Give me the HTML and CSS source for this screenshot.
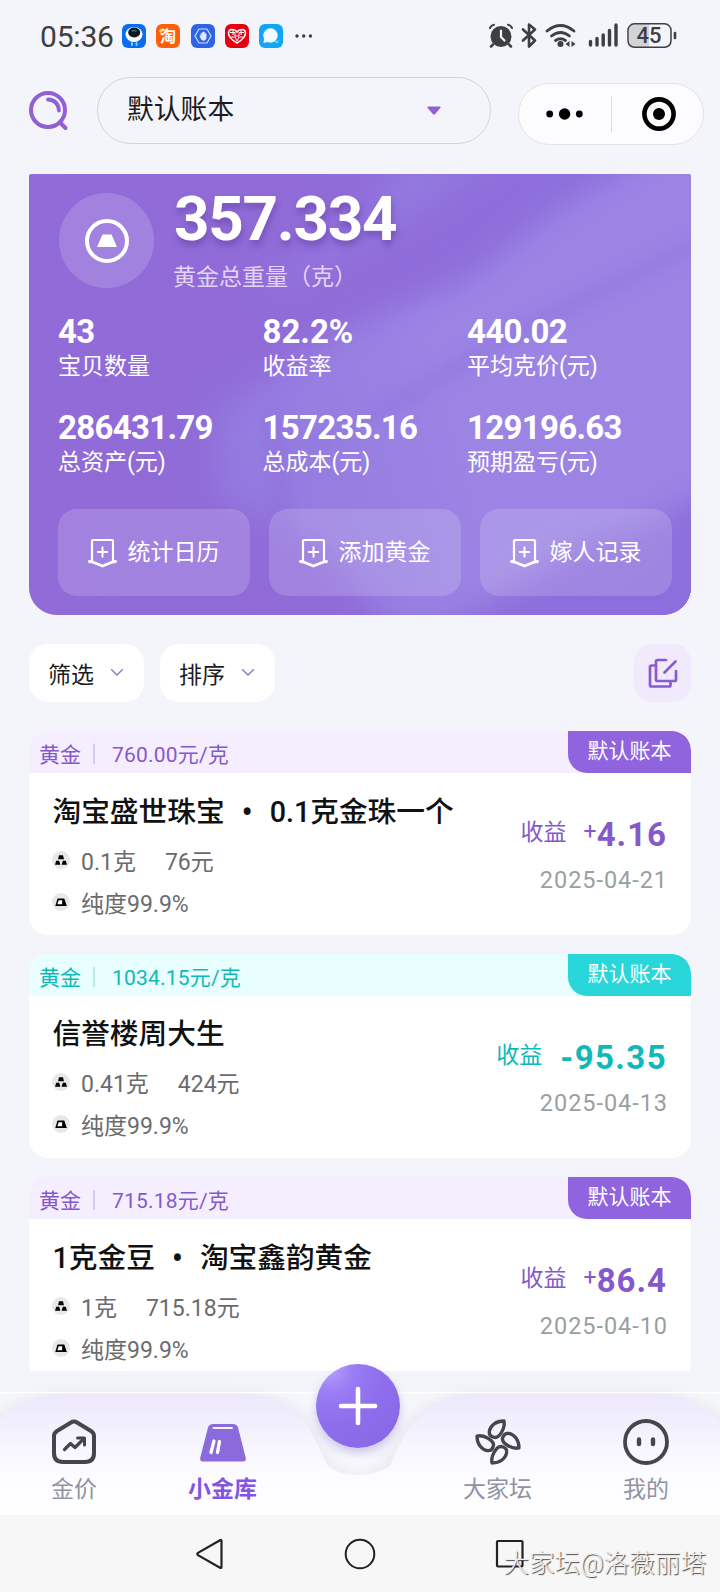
FILE: index.html
```html
<!DOCTYPE html>
<html lang="zh-CN">
<head>
<meta charset="utf-8">
<title>小金库</title>
<link rel="stylesheet" href="styles.css">
</head>
<body>
<svg class="defs" aria-hidden="true">
  <symbol id="i-badge" viewBox="0 0 30 30">
    <path d="M5 23V3.200q0-1.200 1.200-1.200h18.600q1.200 0 1.200 1.200V23" fill="none" stroke="#fff" stroke-width="2.200"/>
    <path d="M2.500 23.500l3 .5 10 4 10-4 3-.5" fill="none" stroke="#fff" stroke-width="2.800" stroke-linecap="round" stroke-linejoin="round"/>
    <path d="M15.500 8.500v11M10 14h11" stroke="#fff" stroke-width="1.900"/>
  </symbol>
  <symbol id="i-weight" viewBox="0 0 18 18">
    <circle cx="9" cy="9" r="9" fill="#e8e8e8"/>
    <path d="M7 4.300h4l1 4H6zM4.200 9.700h3l1.200 4.100H3zM10.800 9.700h3l1.200 4.100H9.600z"/>
  </symbol>
  <symbol id="i-purity" viewBox="0 0 18 18">
    <circle cx="9" cy="9" r="9" fill="#e8e8e8"/>
    <path d="M5.500 5.500h6.800l2.500 7.500H3.300z"/>
    <path d="M6.800 7.200h3.300v4H5.300z" fill="#fff"/>
  </symbol>
</svg>

<div class="status">
  <span class="time">05:36</span>
  <div class="apps">
    <svg width="24" height="24" viewBox="0 0 24 24"><rect width="24" height="24" rx="6" fill="#0a6cf0"/><ellipse cx="12" cy="10.500" rx="8.500" ry="7.500" fill="#fff"/><ellipse cx="12.200" cy="8.500" rx="6" ry="5" fill="#0b1a22"/><path d="M10 7.500q2-2 4.500 0" stroke="#2a7b86" stroke-width="1.500" fill="none"/><path d="M10 19v2M14.500 19v2" stroke="#6fe3f5" stroke-width="1.800" stroke-linecap="round"/></svg>
    <svg width="24" height="24" viewBox="0 0 24 24"><rect width="24" height="24" rx="6" fill="#ff5e0b"/><text x="12" y="18" text-anchor="middle" class="tao">淘</text><circle cx="4.800" cy="7" r="1.800" fill="#ffe23a"/></svg>
    <svg width="24" height="24" viewBox="0 0 24 24"><rect width="24" height="24" rx="6" fill="#2f63e6"/><path d="M8 5h8l4 7-4 7H8l-4-7z" fill="none" stroke="#cfdcfb" stroke-width="1.200"/><path d="M8.500 11.500l1 .2V9.500h1.200V8.300H12V7.800h1.300v.7h1.200v1.200h1v4.500q-1 2.500-3.300 2.500-2.200 0-3.700-5.200z" fill="#dfe8fc"/></svg>
    <svg width="24" height="24" viewBox="0 0 24 24"><rect width="24" height="24" rx="6" fill="#e60012"/><path d="M12 19Q3.500 14 3.500 9q0-3.500 4-3.500 3 0 4.500 2.500 1.500-2.500 4.500-2.500 4 0 4 3.500 0 5-8.500 10z" fill="none" stroke="#fff" stroke-width="1.500"/><path d="M5 8.500h5v3.500h4V8.500h5M6 13h4l2 4 2-4h4M8 6v5M16 6v5" fill="none" stroke="#fff"/></svg>
    <svg width="24" height="24" viewBox="0 0 24 24"><rect width="24" height="24" rx="6" fill="#12a4f5"/><path d="M14 17.500q6 0 6-3l-1 5-3-1z" fill="#53d6f8"/><circle cx="11.500" cy="11.500" r="7.200" fill="#f2fbff"/><path d="M5 14l-.5 5 4.500-1z" fill="#f2fbff"/></svg>
  </div>
  <svg class="more" width="18" height="6" viewBox="0 0 18 6"><g fill="#3a3b3d"><circle cx="2" cy="3" r="1.700"/><circle cx="8.700" cy="3" r="1.700"/><circle cx="15.400" cy="3" r="1.700"/></g></svg>
  <svg class="signals" width="190" height="28" viewBox="0 0 190 28">
    <g fill="none" stroke="#3e3f42" stroke-linecap="round">
      <circle cx="13" cy="14.500" r="10.500" fill="#3e3f42" stroke="none"/>
      <path d="M2 6Q3.500 3 6 2.700M20 2.700q2.500.3 4 3.300" stroke-width="2"/>
      <path d="M5 22.500l-2 2M21 22.500l2 2" stroke-width="2.500"/>
      <path d="M13 8.500v6.500l3.500 3.500" stroke="#f4f5f9" stroke-width="2.200"/>
      <path d="M35 7.500l12 11-6 6V2.500l6 5-12 11" stroke-width="2.600" stroke-linejoin="round"/>
      <path d="M59 9q13.500-11 27 0M63.500 14q9-7 18 0M67.500 18.500q5-3.500 10 0" stroke-width="2.800"/>
      <circle cx="72.500" cy="22" r="3" fill="#3e3f42" stroke="none"/>
      <path d="M81.500 19v6l-4-3zM83.500 19v6l4-3z" fill="#3e3f42" stroke="none"/>
      <path d="M102.500 19.500v3.500M109 16.500v6.500M115.200 13v10M121.500 8.500v14.500M128 3v20" stroke-width="3.400"/>
    </g>
    <path d="M147 2h14v23h-14q-6-1-6-6V8q0-6 6-6z" fill="#d2d3d7"/>
    <rect x="140" y="1.800" width="43" height="23.500" rx="6.500" fill="none" stroke="#3e3f42" stroke-width="1.500"/>
    <path d="M187 11v5" stroke="#3e3f42" stroke-width="2.600" stroke-linecap="round"/>
    <text x="161" y="21" text-anchor="middle" class="batt">45</text>
  </svg>
</div>

<div class="header">
  <svg width="42" height="42" viewBox="0 0 42 42" fill="none" stroke="#9060d4" stroke-linecap="round"><circle cx="20" cy="21" r="17" stroke-width="4"/><path d="M20 10.500q10 .5 11 11" stroke-width="3.800"/><path d="M32.500 34l5 5" stroke-width="4"/></svg>
  <div class="book"><span>默认账本</span><svg width="14" height="9" viewBox="0 0 14 9"><path d="M1 .5h12q1 .3.500 1.200L8 8.200q-1 .8-2 0L.5 1.700Q0 .8 1 .5z" fill="#9060d4"/></svg></div>
  <div class="capsule">
    <svg width="38" height="14" viewBox="0 0 38 14"><circle cx="3.700" cy="7" r="3.400"/><circle cx="18.600" cy="7" r="5.700"/><circle cx="33.300" cy="7" r="3.400"/></svg>
    <i></i>
    <svg width="34" height="34" viewBox="0 0 34 34"><circle cx="17" cy="17" r="14.600" fill="none" stroke="#000" stroke-width="4.600"/><circle cx="17" cy="17" r="6"/></svg>
  </div>
</div>

<main class="view">
  <section class="summary">
    <svg class="silk" width="662" height="442" viewBox="0 0 662 442" aria-hidden="true">
      <defs>
        <filter id="soft" x="-30%" y="-30%" width="160%" height="160%"><feGaussianBlur stdDeviation="15"/></filter>
        <filter id="fine" x="-20%" y="-20%" width="140%" height="140%"><feGaussianBlur stdDeviation="7"/></filter>
        <linearGradient id="base"><stop offset="0" stop-color="#916bd8"/><stop offset=".5" stop-color="#906cd9"/><stop offset="1" stop-color="#8c70dd"/></linearGradient>
        <linearGradient id="sheen" gradientUnits="userSpaceOnUse" x1="200" y1="280" x2="420" y2="220"><stop offset="0" stop-color="#937adf"/><stop offset="1" stop-color="#9b84e4"/></linearGradient>
      </defs>
      <rect width="662" height="442" fill="url(#base)"/>
      <g filter="url(#soft)">
        <path d="M230 110L330 55 370-20H480L380 45 260 115z" fill="#9580e2" opacity=".6"/>
        <path d="M185 240L310 160 440 105 530 35 640-30 720-40V320L560 370 440 440 370 460 290 370 190 320z" fill="url(#sheen)"/>
        <path d="M410 470L520 410 720 290V480z" fill="#8c6edc"/>
      </g>
      <path d="M260 275L370 218 466 160 670 62V76L480 172 380 232 280 282z" fill="#8f74dd" opacity=".5" filter="url(#fine)"/>
      <path d="M235 240l18-8 12 130-20 60z" fill="#8e6edb" opacity=".45" filter="url(#fine)"/>
    </svg>
    <div class="total">
      <div class="coin"><svg width="46" height="46" viewBox="0 0 46 46"><circle cx="23" cy="23" r="20" fill="none" stroke="#fff" stroke-width="4"/><path d="M18.500 16.500h9l5.500 12.500h-20z" fill="#fff"/></svg></div>
      <div><div class="grams">357.334</div><div class="grams-label">黄金总重量（克）</div></div>
    </div>
    <div class="stats">
      <div><b>43</b><span>宝贝数量</span></div>
      <div><b class="pct">82.2%</b><span>收益率</span></div>
      <div><b>440.02</b><span>平均克价(元)</span></div>
      <div><b>286431.79</b><span>总资产(元)</span></div>
      <div><b>157235.16</b><span>总成本(元)</span></div>
      <div><b>129196.63</b><span>预期盈亏(元)</span></div>
    </div>
    <div class="actions">
      <div><svg width="30" height="30"><use href="#i-badge"/></svg>统计日历</div>
      <div><svg width="30" height="30"><use href="#i-badge"/></svg>添加黄金</div>
      <div><svg width="30" height="30"><use href="#i-badge"/></svg>嫁人记录</div>
    </div>
  </section>

  <div class="filters">
    <div class="chip">筛选<svg width="14" height="9" viewBox="0 0 14 9"><path d="M1.200 1.200L7 7l5.800-5.800" fill="none" stroke="#8f74b8" stroke-width="1.300"/></svg></div>
    <div class="chip">排序<svg width="14" height="9" viewBox="0 0 14 9"><path d="M1.200 1.200L7 7l5.800-5.800" fill="none" stroke="#8f74b8" stroke-width="1.300"/></svg></div>
    <div class="edit"><svg width="30" height="30" viewBox="0 0 30 30" fill="none" stroke="#8a5bd0" stroke-width="2.700" stroke-linecap="round" stroke-linejoin="round"><path d="M18 2H9.500Q8 2 8 3.500v18Q8 23 9.500 23h17q1.500 0 1.500-1.500V13"/><path d="M7 7.500H3.500Q2 7.500 2 9v18q0 1.500 1.500 1.500h17.500q1.500 0 1.500-1.500v-3"/><path d="M16.500 14.500L27.500 3.500"/></svg></div>
  </div>

  <article class="item">
    <div class="head"><span>黄金</span><i></i><span class="price">760.00元/克</span><span class="tag">默认账本</span></div>
    <div class="body">
      <div class="info"><h2>淘宝盛世珠宝<em>•</em>0.1克金珠一个</h2>
        <p><svg width="18" height="18"><use href="#i-weight"/></svg>0.1克<span class="cost">76元</span></p>
        <p><svg width="18" height="18"><use href="#i-purity"/></svg>纯度99.9%</p></div>
      <div class="gain"><div class="profit">收益<sup>+</sup><b>4.16</b></div><time>2025-04-21</time></div>
    </div>
  </article>
  <article class="item teal">
    <div class="head"><span>黄金</span><i></i><span class="price">1034.15元/克</span><span class="tag">默认账本</span></div>
    <div class="body">
      <div class="info"><h2>信誉楼周大生</h2>
        <p><svg width="18" height="18"><use href="#i-weight"/></svg>0.41克<span class="cost">424元</span></p>
        <p><svg width="18" height="18"><use href="#i-purity"/></svg>纯度99.9%</p></div>
      <div class="gain"><div class="profit">收益<b class="neg">-95.35</b></div><time>2025-04-13</time></div>
    </div>
  </article>
  <article class="item">
    <div class="head"><span>黄金</span><i></i><span class="price">715.18元/克</span><span class="tag">默认账本</span></div>
    <div class="body">
      <div class="info"><h2>1克金豆<em>•</em>淘宝鑫韵黄金</h2>
        <p><svg width="18" height="18"><use href="#i-weight"/></svg>1克<span class="cost">715.18元</span></p>
        <p><svg width="18" height="18"><use href="#i-purity"/></svg>纯度99.9%</p></div>
      <div class="gain"><div class="profit">收益<sup>+</sup><b>86.4</b></div><time>2025-04-10</time></div>
    </div>
  </article>
</main>

<nav class="tabs">
  <svg class="tabs-bg" width="720" height="144" viewBox="0 0 720 144" aria-hidden="true">
    <defs>
      <linearGradient id="lilac" gradientUnits="userSpaceOnUse" x1="0" y1="21" x2="0" y2="144"><stop offset="0" stop-color="#ece7fc"/><stop offset=".3" stop-color="#f4f1fe"/><stop offset=".65" stop-color="#fcfbff"/><stop offset="1" stop-color="#fff"/></linearGradient>
      <linearGradient id="pale" gradientUnits="userSpaceOnUse" x1="0" y1="21" x2="0" y2="144"><stop offset="0" stop-color="#f6f7fb"/><stop offset=".5" stop-color="#f7f8fc"/><stop offset=".75" stop-color="#fff"/></linearGradient>
      <filter id="haze" x="-10%" y="-30%" width="120%" height="160%"><feGaussianBlur stdDeviation="7"/></filter>
    </defs>
    <rect y="21" width="720" height="123" fill="url(#pale)"/>
    <path d="M-20 60Q15 21 70 21H240Q295 21 316 62 330 100 357 100 384 100 400 62 425 21 480 21H650Q700 21 740 60V144H-20z" fill="#c9c7d6" opacity=".3" filter="url(#haze)"/>
    <path d="M-20 70Q15 22 70 22H235Q290 22 312 62L328 95Q340 104 357 104 376 104 390 95 402 62 425 40 445 22 480 22H650Q700 22 740 70V144H-20z" fill="url(#lilac)"/>
    <path d="M0 21.500H720" stroke="#fff" stroke-width="1.600"/>
  </svg>
  <div class="tab"><svg width="46" height="46" viewBox="0 0 46 46" fill="none" stroke="#45464c" stroke-linejoin="round" stroke-linecap="round"><path d="M20 3.500q3-2 6 0L40 12q3 2 3 5v17q0 9-9 9H12q-9 0-9-9V17q0-3 3-5z" stroke-width="4"/><path d="M13.500 30.500l6-6 4.500 4L32.500 20" stroke-width="3.200"/><path d="M26.500 19h7v7" stroke-width="3"/></svg>金价</div>
  <div class="tab on"><svg width="46" height="46" viewBox="0 0 46 46"><path d="M13 5h20q4 0 5 3.500L45.800 39q.2 3.500-2.300 3.500H2.500Q0 42.500.2 39L8 8.500Q9 5 13 5z" fill="#8b6bdc"/><path d="M13.500 9h18.500" stroke="#f5f0ff" stroke-width="2" stroke-linecap="round"/><path d="M14 22L11 33.500M19.500 22.500l-2 11" stroke="#fff" stroke-width="3.300" stroke-linecap="round"/></svg>小金库</div>
  <div class="add"><svg width="38" height="38" viewBox="0 0 38 38"><path d="M19 2v34M2 19h34" stroke="#fff" stroke-width="4.600" stroke-linecap="round"/></svg></div>
  <div class="tab"><svg width="46" height="46" viewBox="-23 -23 46 46" fill="none" stroke="#45464c" stroke-width="3.300" stroke-linejoin="round"><path id="petal" d="M-5-5C-11-7-9-14-4-18Q0-21 6-21Q7-16 4-10.500C1-5-2-3.500-5-5z"/><use href="#petal" transform="rotate(90)"/><use href="#petal" transform="rotate(180)"/><use href="#petal" transform="rotate(270)"/></svg>大家坛</div>
  <div class="tab"><svg width="46" height="46" viewBox="0 0 46 46" fill="none" stroke="#45464c"><circle cx="23" cy="23" r="21" stroke-width="3.800"/><path d="M16 20.500v4.500M30 20.500v4.500" stroke-width="4.400" stroke-linecap="round"/></svg>我的</div>
</nav>

<footer class="sysbar">
  <svg width="30" height="32" viewBox="0 0 30 32"><path d="M27.500 3v26q0 1.500-1.500.8L4 17.200Q2.500 16 4 14.800L26 2.200q1.500-.7 1.500.8z" fill="none" stroke="#222" stroke-width="2.200"/></svg>
  <svg width="32" height="32" viewBox="0 0 32 32"><circle cx="16" cy="16" r="14.300" fill="none" stroke="#222" stroke-width="2"/></svg>
  <svg width="30" height="30" viewBox="0 0 30 30"><rect x="1" y="2" width="25.500" height="25.500" rx="1" fill="none" stroke="#222" stroke-width="2.200"/></svg>
  <span class="mark">大家坛@洛薇丽塔</span>
</footer>
</body>
</html>
```
FILE: styles.css
```css
* { box-sizing: border-box; margin: 0; padding: 0; }
body {
  width: 720px; height: 1592px; overflow: hidden; background: #f4f5fa;
  font-family: Roboto, "Noto Sans CJK SC", sans-serif; color: #1c1c1e;
  display: flex; flex-direction: column;
}
svg { display: block; flex: none; overflow: visible; }
.defs { position: absolute; width: 0; height: 0; }

.status { height: 72px; display: flex; align-items: center; padding: 0 42px 0 40px; color: #3e3f42; }
.time { width: 82px; font-size: 30px; line-height: 40px; letter-spacing: -.2px; padding-top: 1px; }
.apps { display: flex; gap: 10.300px; }
.more { margin-left: 12px; }
.signals { margin-left: auto; }
.tao { font: 700 16px "Noto Sans CJK SC", sans-serif; fill: #fff; }
.batt { font: 500 22px Roboto, sans-serif; fill: #3e3f42; }

.header { height: 101.500px; padding: 5px 16px 0 28px; display: flex; align-items: flex-start; }
.header > svg { margin-top: 12px; }
.book {
  width: 394px; height: 67px; margin-left: 27px; padding: 0 49px 2px 29px;
  border: 1.500px solid #d3d4da; border-radius: 34px;
  display: flex; align-items: center; justify-content: space-between;
  font-size: 26.800px; line-height: 40px;
}
.book svg { margin-top: 2px; }
.capsule {
  width: 186px; height: 62px; margin: 6px 0 0 27px; padding: 0 27px;
  border: 1px solid #e3e3e8; border-radius: 31px; background: #fcfcfe;
  display: flex; align-items: center; justify-content: space-between;
}
.capsule i { width: 1.500px; height: 36px; background: #dcdce0; margin-left: -1px; margin-right: 2px; }

.view { height: 1197.500px; padding: 0 29px; overflow: hidden; flex: none; }
.summary {
  position: relative; height: 441.500px; padding: 19.500px 19px 0 29px; color: #fff;
  border-radius: 3px 3px 28px 28px; overflow: hidden; background: #916bd8;
}
.silk { position: absolute; inset: 0; z-index: 0; }
.summary > div { position: relative; }
.total { display: flex; height: 112.500px; gap: 20px; padding-left: 1px; }
.coin { width: 95px; height: 95px; border-radius: 50%; background: rgba(255,255,255,.16); display: grid; place-items: center; }
.grams { font-size: 62px; line-height: 60px; font-weight: 700; letter-spacing: -1.300px; margin-top: -4px; text-shadow: 1px 5px 6px rgba(70,40,130,.36); }
.grams-label { font-size: 23px; line-height: 32px; margin: 13px 0 0 -1px; color: #e3d4f6; }
.stats { display: grid; grid-template-columns: repeat(3, 204.500px); grid-auto-rows: 96px; height: 203.500px; padding-top: 7px; }
.stats b, .stats span { display: block; white-space: nowrap; }
.stats b { font-size: 33px; line-height: 38px; letter-spacing: -.7px; }
.stats .pct { letter-spacing: 0; }
.stats span { font-size: 23px; line-height: 32px; }
.actions { display: grid; grid-template-columns: repeat(3, 192px); gap: 19px; }
.actions div {
  height: 87px; border-radius: 19px; background: rgba(255,255,255,.16);
  display: flex; align-items: center; justify-content: center; gap: 11px; font-size: 23px; line-height: 32px; padding-right: 2px;
}

.filters { display: flex; gap: 16px; margin: 29px 0; height: 58px; }
.chip { width: 115px; border-radius: 19px; background: #fff; display: flex; align-items: center; gap: 16px; padding: 6px 0 0 19px; font-size: 23px; line-height: 32px; }
.chip svg { margin-top: -8px; }
.edit { width: 57px; margin-left: auto; border-radius: 18px; background: #f1eafd; display: grid; place-items: center; }

.item { --main: #8659cb; --tag: #9064df; --tint: #f4eefe; height: 204px; margin-bottom: 19px; border-radius: 19px; overflow: hidden; background: #fff; }
.teal { --main: #0fb9b9; --tag: #29d7db; --tint: #e9fefe; }
.head { height: 42px; background: var(--tint); color: var(--main); display: flex; align-items: center; padding-left: 10px; font-size: 21px; line-height: 30px; }
.head > span { padding-top: 6px; }
.head i { width: 2px; height: 20px; margin: 4px 17px 0 12px; background: currentColor; opacity: .25; }
.head .price { letter-spacing: .2px; }
.head .tag { width: 123px; height: 42px; margin-left: auto; padding-top: 5px; border-radius: 0 19px 0 19px; background: var(--tag); color: #fff; text-align: center; }
.body { display: flex; justify-content: space-between; padding: 16px 24px 0; }
.info h2 { font-size: 28.700px; line-height: 44px; font-weight: 500; color: #111; white-space: nowrap; margin-left: -.5px; }
.info em { font-style: normal; display: inline-block; width: 45px; text-align: center; font-family: "Noto Sans", sans-serif; }
.info p { display: flex; align-items: center; font-size: 23px; line-height: 42px; color: #6b6b6d; font-weight: 400; white-space: nowrap; }
.info h2 + p { margin-top: 8px; }
.info p svg { margin: -6px 11px 0 -1px; }
.cost { margin-left: 29px; }
.gain { text-align: right; padding-top: 21px; white-space: nowrap; }
.profit { color: var(--main); font-size: 23px; line-height: 46px; height: 46px; display: flex; justify-content: flex-end; }
.profit b { font-size: 33px; line-height: 49px; letter-spacing: 1px; font-weight: 700; }
.profit .neg { margin-left: 18px; letter-spacing: 1.400px; }
.profit sup { font-size: 23px; margin-left: 17px; line-height: 44px; vertical-align: baseline; }
.gain time { display: block; font-size: 23.500px; line-height: 30px; margin-top: 9px; margin-right: -1px; color: #9a9fa2; font-weight: 400; letter-spacing: .95px; }

.tabs { position: relative; height: 144px; display: grid; grid-template-columns: 148px 149px 120px 161px 136px; flex: none; }
.tabs-bg { position: absolute; left: 0; top: 0; }
.tab { position: relative; padding-top: 48px; display: flex; flex-direction: column; align-items: center; font-size: 23px; line-height: 32px; color: #9094a2; gap: 9px; }
.on { color: #8355e0; font-weight: 700; }
.add {
  position: relative; width: 84px; height: 84px; margin: -7px 0 0 18.500px; border-radius: 50%;
  background: radial-gradient(circle at 18% 8%, #b39cfb 0, #9a7cf5 22%, #8e6eec 50%, #8766e2 100%);
  box-shadow: 0 5px 10px rgba(110,85,200,.3); display: grid; place-items: center;
}

.sysbar { position: relative; height: 77px; background: #f7f7f7; display: flex; align-items: center; justify-content: center; gap: 120px; }
.mark {
  position: absolute; right: 14px; top: 30px; font-size: 25.500px; line-height: 36px; letter-spacing: .1px; white-space: nowrap;
  color: #f1f1f1; font-weight: 300; text-shadow: 1px 1px 1px #444;
}
```
